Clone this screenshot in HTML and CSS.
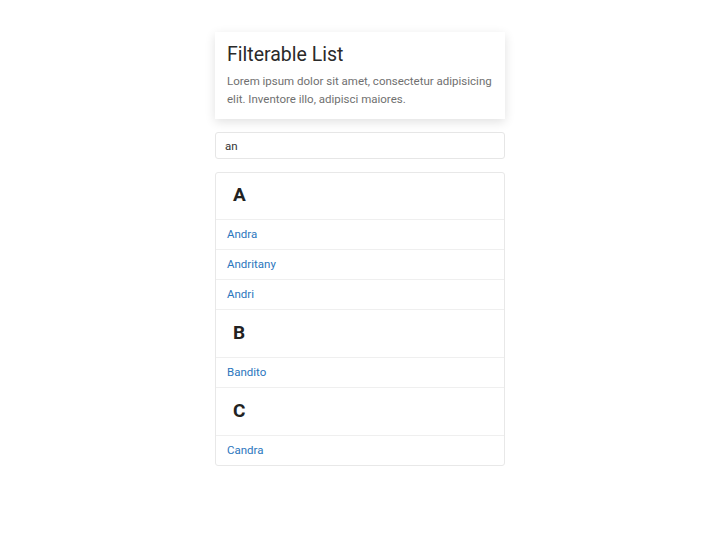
FILE: index.html
```
<!DOCTYPE html>
<html>
<head>
<meta charset="utf-8">
<link rel="stylesheet" href="styles.css">
</head>
<body>
<div class="wrap">
  <div class="card">
    <h1 class="title">Filterable List</h1>
    <p class="lead">Lorem ipsum dolor sit amet, consectetur adipisicing elit. Inventore illo, adipisci maiores.</p>
  </div>
  <input class="search" type="text" value="an">
  <ul class="list">
    <li class="head">A</li>
    <li class="item"><a href="#">Andra</a></li>
    <li class="item"><a href="#">Andritany</a></li>
    <li class="item"><a href="#">Andri</a></li>
    <li class="head">B</li>
    <li class="item"><a href="#">Bandito</a></li>
    <li class="head">C</li>
    <li class="item"><a href="#">Candra</a></li>
  </ul>
</div>
</body>
</html>
```
FILE: styles.css
```
* { box-sizing: border-box; }
html, body { margin: 0; padding: 0; background: #fff; }
body { font-family: Roboto, "Noto Sans", sans-serif; color: #333; }
.wrap {
  width: 290px;
  margin: 32px auto 0;
  display: flex;
  flex-direction: column;
}
.card {
  background: #fff;
  box-shadow: 0 3px 10px rgba(0,0,0,0.12);
  padding: 11px 12px 12px;
  height: 87px;
}
.title {
  margin: 0;
  font-size: 19.5px;
  font-weight: 400;
  color: #2a2a2a;
  line-height: 24px;
}
.lead {
  margin: 5px 0 0;
  font-size: 11.5px;
  line-height: 18px;
  color: #707070;
}
.search {
  margin-top: 13px;
  height: 27px;
  width: 100%;
  border: 1px solid #e6e6e6;
  border-radius: 3px;
  padding: 0 9px;
  font-family: Roboto, "Noto Sans", sans-serif;
  font-size: 11.5px;
  color: #333;
  outline: none;
}
.list {
  margin: 13px 0 0;
  padding: 0;
  list-style: none;
  border: 1px solid #e8e8e8;
  border-radius: 3px;
}
.list li { border-top: 1px solid #efefef; }
.list li:first-child { border-top: none; }
.head {
  height: 48px;
  padding: 11px 0 0 17px;
  font-size: 19px;
  font-weight: 700;
  color: #222;
  line-height: 24px;
}
.list li.head:first-child { height: 46px; padding-top: 10px; }
.item {
  height: 30px;
  padding: 0 11px;
  font-size: 11.5px;
  line-height: 29px;
}
.item a { color: #2b76bd; text-decoration: none; }
```
